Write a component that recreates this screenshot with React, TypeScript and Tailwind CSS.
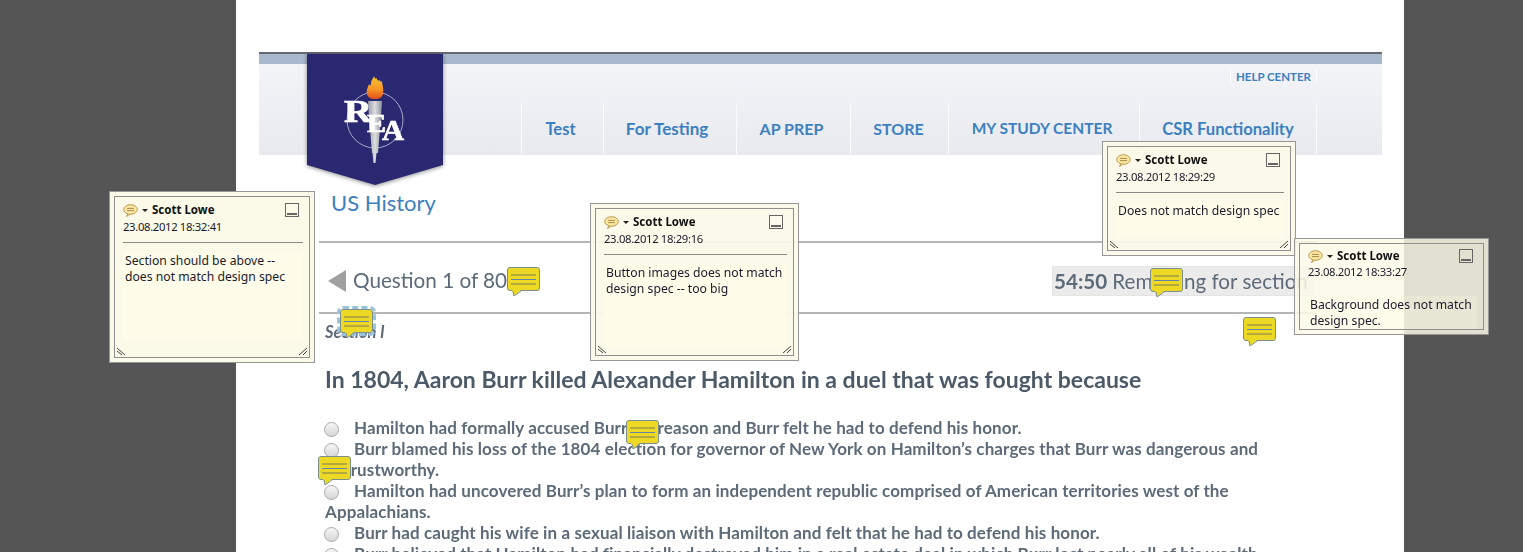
import React from 'react';

const navItems = [
  { label: 'Test', style: 'w-[81px] pr-[4px] text-[16.5px]' },
  { label: 'For Testing', style: 'w-[132px] pr-[6px] text-[17px]' },
  { label: 'AP PREP', style: 'w-[113px] pr-[4px] text-[16px]' },
  { label: 'STORE', style: 'w-[97px] pr-[2px] text-[16px]' },
  { label: 'MY STUDY CENTER', style: 'w-[190px] pr-[4px] text-[15.5px]' },
  { label: 'CSR Functionality', style: 'w-[176px] text-[16.6px]' },
];

const answers = [
  'Hamilton had formally accused Burr of treason and Burr felt he had to defend his honor.',
  'Burr blamed his loss of the 1804 election for governor of New York on Hamilton’s charges that Burr was dangerous and untrustworthy.',
  'Hamilton had uncovered Burr’s plan to form an independent republic comprised of American territories west of the Appalachians.',
  'Burr had caught his wife in a sexual liaison with Hamilton and felt that he had to defend his honor.',
  'Burr believed that Hamilton had financially destroyed him in a real estate deal in which Burr lost nearly all of his wealth.',
];

function Logo() {
  return (
    <svg width="138" height="134" viewBox="0 0 138 134" className="absolute left-[48px] top-0 drop-shadow-[0_1px_2px_rgba(0,0,0,0.45)]">
      <defs>
        <linearGradient id="flame" x1="0" y1="0" x2="0" y2="1">
          <stop offset="0" stopColor="#f5c431" />
          <stop offset="0.55" stopColor="#f59a25" />
          <stop offset="1" stopColor="#e5501c" />
        </linearGradient>
        <linearGradient id="torch" x1="0" y1="0" x2="1" y2="0">
          <stop offset="0" stopColor="#9a9da5" />
          <stop offset="0.5" stopColor="#dcdde0" />
          <stop offset="1" stopColor="#90939a" />
        </linearGradient>
      </defs>
      <polygon points="0,0 136,0 136,111 68,131 0,111" fill="#2a2870" />
      <circle cx="68" cy="66" r="28" fill="none" stroke="#a9abc9" strokeWidth="1" />
      <path d="M61 47h14l-1 16-3 36h-1.5l-1 10h-2l-1-10H65l-3-36z" fill="url(#torch)" />
      <path d="M60 40c-1-5 1-6 2-10 1 2 2 2 2-1 0-3 2-4 3-7 1 3 2 3 3 2 0 3 2 3 3 2 0 2 1 2 2 1 0 4 2 6 1 13-1 4-4 5-8 5s-7-1-8-5z" fill="url(#flame)" />
      <text x="37" y="68" textLength="28" lengthAdjust="spacingAndGlyphs" fontFamily="'Liberation Serif', serif" fontWeight="700" fontSize="31" fill="#fff" stroke="#fff" strokeWidth="0.7">R</text>
      <text x="60" y="78" textLength="19" lengthAdjust="spacingAndGlyphs" fontFamily="'Liberation Serif', serif" fontWeight="700" fontSize="26" fill="#fff" stroke="#fff" strokeWidth="0.7">E</text>
      <text x="75" y="86" textLength="22" lengthAdjust="spacingAndGlyphs" fontFamily="'Liberation Serif', serif" fontWeight="700" fontSize="30" fill="#fff" stroke="#fff" strokeWidth="0.7">A</text>
    </svg>
  );
}

function Marker({ className, selected }: { className: string; selected?: boolean }) {
  return (
    <div className={`absolute ${className}`}>
      <div
        className={`relative flex h-[24px] w-[33px] flex-col items-center justify-center gap-[3px] rounded-[3px] border border-[#7b8f8f] bg-[#edd924] ${
          selected ? 'outline-[3px] outline-dashed outline-[#9cc3dc]' : ''
        }`}
      >
        <span className="h-[2px] w-[25px] bg-[#b3a93d]" />
        <span className="h-[1px] w-[25px] bg-[#5f86a8]" />
        <span className="h-[2px] w-[25px] bg-[#b3a93d]" />
        <svg width="10" height="7" viewBox="0 0 10 7" className="absolute left-[4px] top-[22px]">
          <path d="M0 0h9L2 6z" fill="#edd924" />
          <path d="M1 1l1 5 7-5" fill="none" stroke="#7b8f8f" strokeWidth="1" />
        </svg>
      </div>
    </div>
  );
}

type NoteProps = {
  date: string;
  children: React.ReactNode;
  className: string;
  body: string;
  hideGrips?: boolean;
};

function Note({ date, children, className, body, hideGrips }: NoteProps) {
  return (
    <div className={`absolute border border-[#979797] p-[4px] font-['Noto_Sans',sans-serif] text-[#1a1a2a] ${className}`}>
      <div className="relative flex h-full flex-col border border-[#8f8f8f] pl-[8px] pr-[6px] pt-[5px]">
        <div className="flex h-[16px] items-center">
          <svg width="15" height="13" viewBox="0 0 15 13">
            <ellipse cx="7.5" cy="5.5" rx="6.8" ry="4.8" fill="#fbe6a2" stroke="#b89a55" />
            <path d="M5 9.5l-1.5 3 4-2.6" fill="#fbe6a2" stroke="#b89a55" />
            <path d="M4 4.4h7M4 6.6h7" stroke="#a88c4a" strokeWidth="1" />
          </svg>
          <span className="ml-[4px] h-0 w-0 border-x-[3px] border-t-[3px] border-x-transparent border-t-[#222]" />
          <span className="ml-[4px] text-[11.5px] leading-none font-bold text-[#111]">Scott Lowe</span>
          <span className="ml-auto mr-[4px] flex h-[14px] w-[14px] items-end justify-center border border-[#666] pb-[1px]">
            <span className="h-[2px] w-[10px] bg-[#666]" />
          </span>
        </div>
        <div className="mt-px text-[11.3px] leading-[16px] tracking-[-0.35px]">{date}</div>
        <div className="mt-[7px] h-px bg-[#8a8a8a]" />
        <div className={`relative mt-[9px] pl-[2px] pt-[1px] text-[12.2px] leading-[16px] ${body}`}>{children}</div>
        {!hideGrips && (
          <>
            <svg width="11" height="9" viewBox="0 0 11 9" className="absolute bottom-[1px] left-[1px]">
              <path d="M1 1l8 7M1 4l5 4" stroke="#444" strokeWidth="1" fill="none" />
            </svg>
            <svg width="11" height="9" viewBox="0 0 11 9" className="absolute bottom-[1px] right-[1px]">
              <path d="M10 1L2 8M10 4L6 8" stroke="#444" strokeWidth="1" fill="none" />
            </svg>
          </>
        )}
      </div>
    </div>
  );
}

export default function App() {
  return (
    <div className="relative h-[552px] overflow-hidden bg-[#555555] pl-[236px] pr-[119px] font-['Lato',sans-serif]">
      <div className="h-[552px] bg-white pl-[23px] pr-[22px] pt-[52px] blur-[0.3px]">
        <header className="relative flex h-[103px] flex-col border-t-2 border-[#666a70]">
          <div className="h-[10px] bg-[#a9b8cc]" />
          <div className="flex flex-1 flex-col items-end bg-gradient-to-b from-[#f3f4f8] to-[#e8eaef] pr-[65px]">
            <div className="mt-[6px] border-x border-white px-[5px] text-[11.5px] leading-[14px] font-bold text-[#3d80bf]">HELP CENTER</div>
            <nav className="mt-[19px] flex h-[51px] border-r border-[#fafbfd]">
              {navItems.map((item) => (
                <div key={item.label} className="border-l border-[#fafbfd]">
                  <a className={`flex h-full items-center justify-center pt-[1px] font-bold text-[#3d80bf] ${item.style}`}>
                    {item.label}
                  </a>
                </div>
              ))}
            </nav>
          </div>
          <Logo />
        </header>

        <main className="pl-[60px] pr-[65px]">
          <h1 className="ml-[12px] mt-[33px] text-[22px] leading-[30px] text-[#3d80bf]">US History</h1>
          <div className="mt-[23px] h-[2px] bg-[#b5b5b5]" />
          <div className="mt-[23px] flex h-[30px] items-center justify-between">
            <div className="flex items-center text-[20.7px] text-[#5d6a78]">
              <svg width="20" height="24" viewBox="0 0 20 24" className="ml-[8px] mr-[6px]">
                <path d="M19 1v22L1 12z" fill="#a0a0a0" />
              </svg>
              Question 1 of 80
            </div>
            <div className="mr-[4px] w-[261px] whitespace-nowrap border border-[#e4e4e4] bg-[#ebebeb] pl-px text-[20.6px] leading-[28px] text-[#5d6a78]">
              <span className="font-bold">54:50</span> Remaining for section
            </div>
          </div>
          <div className="mt-[16px] h-[2px] bg-[#b5b5b5]" />
          <div className="ml-[6px] mt-[8px] text-[16.5px] leading-[20px] font-bold italic text-[#5d6a78]">Section I</div>
          <h2 className="ml-[6px] mt-[22px] whitespace-nowrap text-[23px] leading-[30px] font-bold text-[#4c5a68]">In 1804, Aaron Burr killed Alexander Hamilton in a duel that was fought because</h2>
          <div className="ml-[6px] mt-[23px] text-[17px] leading-[21px] font-bold tracking-[0.1px] text-[#5d6a78]">
            {answers.map((answer) => (
              <div key={answer}>
                <span className="-ml-px mr-[15px] inline-block h-[15px] w-[15px] translate-y-[3px] rounded-full border border-[#a9a9a9] bg-gradient-to-b from-[#f6f6f6] to-[#d6d6d6]" />
                {answer}
              </div>
            ))}
          </div>
        </main>
      </div>

      <Marker className="left-[507px] top-[267px]" />
      <Marker className="left-[1150px] top-[268px]" />
      <Marker className="left-[1243px] top-[317px]" />
      <Marker className="left-[626px] top-[420px]" />
      <Marker className="left-[318px] top-[456px]" />
      <Marker className="left-[340px] top-[309px]" selected />

      <Note date="23.08.2012 18:32:41" className="left-[109px] top-[191px] h-[172px] w-[206px] bg-[#fbf9e8]" body="h-[87px] bg-[#fffdea]">
        Section should be above --<br />does not match design spec
      </Note>
      <Note date="23.08.2012 18:29:16" className="left-[590px] top-[203px] h-[158px] w-[209px] bg-[#fbf9e8]/95" body="h-[83px] bg-[#fffdea]/80">
        Button images does not match<br />design spec -- too big
      </Note>
      <Note date="23.08.2012 18:29:29" className="left-[1102px] top-[141px] h-[115px] w-[194px] bg-[#fbf9e8]/95" body="h-[35px] bg-[#fffdea]/80">
        Does not match design spec
      </Note>
      <Note date="23.08.2012 18:33:27" className="left-[1294px] top-[238px] h-[97px] w-[195px] bg-[#fbfae8]/85" body="h-[36px] bg-[#fffdea]/20" hideGrips>
        Background does not match<br />design spec.
      </Note>
    </div>
  );
}
